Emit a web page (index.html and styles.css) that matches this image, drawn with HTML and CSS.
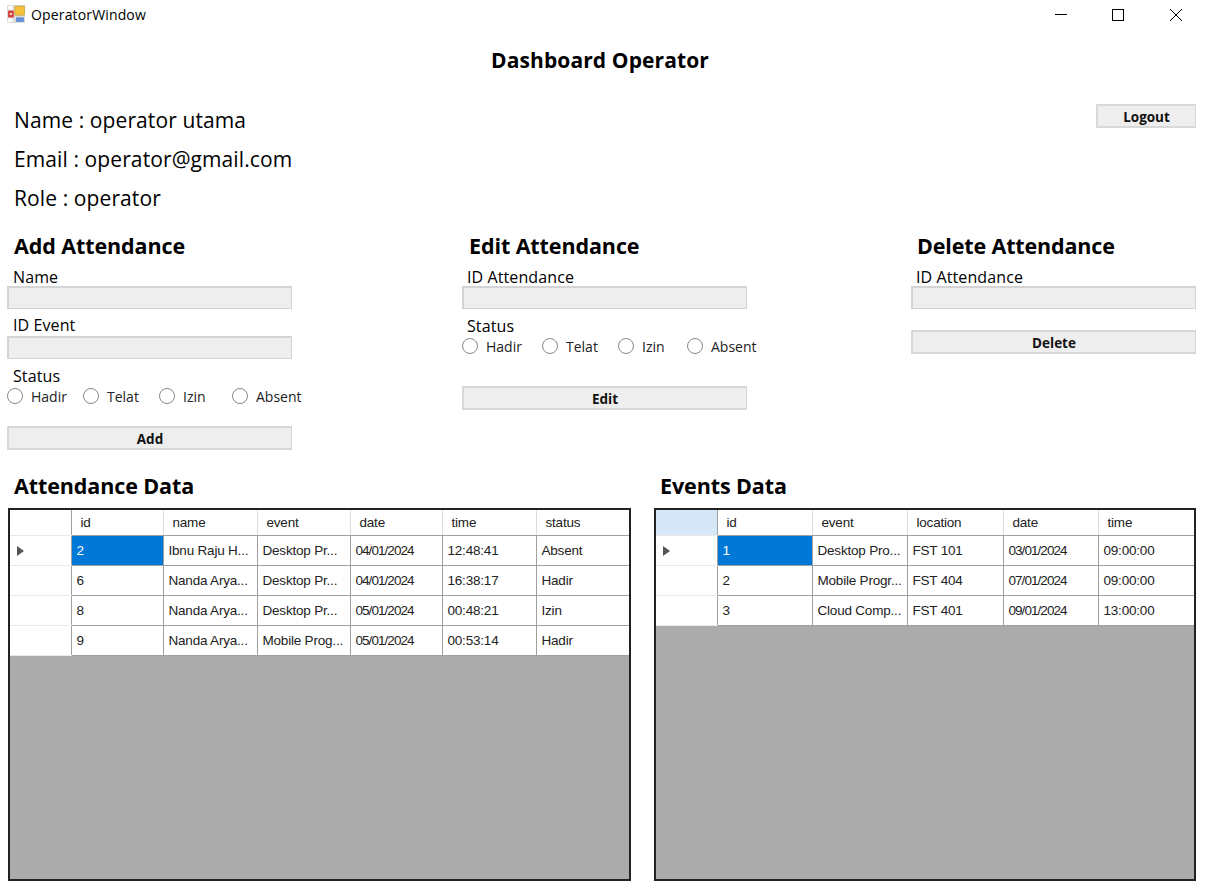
FILE: index.html
```html
<!DOCTYPE html>
<html lang="en">
  <head>
    <meta charset="UTF-8" />
    <title>OperatorWindow</title>
    <link rel="stylesheet" href="styles.css">
  </head>
  <body>
    <div class="titlebar">
      <svg class="app-icon" width="18" height="18" viewBox="0 0 16 16">
        <rect x="0" y="0" width="16" height="16" fill="#dcdcdc" />
        <rect x="1" y="1" width="4" height="3" fill="#fff" />
        <rect x="1" y="5" width="5" height="6" fill="#d23a32" />
        <rect x="2.500" y="7" width="2" height="2" fill="#f4d0c8" />
        <rect x="7" y="1" width="8.500" height="8" fill="#f5c33b" stroke="#c08f1c" stroke-width="0.500" />
        <rect x="1" y="12" width="4" height="3" fill="#fff" />
        <rect x="8" y="11" width="7" height="4" fill="#5f8fd8" />
      </svg>
      <span class="window-title">OperatorWindow</span>
      <div class="window-btns">
        <svg width="58" height="30" viewBox="0 0 58 30"><path d="M24 14.500H36" stroke="#000" /></svg>
        <svg width="58" height="30" viewBox="0 0 58 30"><rect x="23.500" y="9.500" width="11" height="11" fill="none" stroke="#000" /></svg>
        <svg width="58" height="30" viewBox="0 0 58 30"><path d="M23 9L35 21M35 9L23 21" stroke="#000" fill="none" /></svg>
      </div>
    </div>

    <h1 class="page-title">Dashboard Operator</h1>

    <div class="profile">
      <div class="profile-info">
        <p>Name : operator utama</p>
        <p>Email : operator@gmail.com</p>
        <p>Role : operator</p>
      </div>
      <button class="btn logout" type="button">Logout</button>
    </div>

    <div class="forms">
      <form class="panel">
        <h2>Add Attendance</h2>
        <label class="field-label">Name</label>
        <input class="field" type="text" />
        <label class="field-label">ID Event</label>
        <input class="field" type="text" />
        <label class="field-label status-label">Status</label>
        <div class="radios radios-add">
          <label><input type="radio" name="add_status" />Hadir</label>
          <label><input type="radio" name="add_status" />Telat</label>
          <label><input type="radio" name="add_status" />Izin</label>
          <label><input type="radio" name="add_status" />Absent</label>
        </div>
        <button class="btn wide" type="button">Add</button>
      </form>

      <form class="panel">
        <h2>Edit Attendance</h2>
        <label class="field-label">ID Attendance</label>
        <input class="field" type="text" />
        <label class="field-label status-label">Status</label>
        <div class="radios radios-edit">
          <label><input type="radio" name="edit_status" />Hadir</label>
          <label><input type="radio" name="edit_status" />Telat</label>
          <label><input type="radio" name="edit_status" />Izin</label>
          <label><input type="radio" name="edit_status" />Absent</label>
        </div>
        <button class="btn wide edit-btn" type="button">Edit</button>
      </form>

      <form class="panel">
        <h2>Delete Attendance</h2>
        <label class="field-label">ID Attendance</label>
        <input class="field" type="text" />
        <button class="btn wide delete-btn" type="button">Delete</button>
      </form>
    </div>

    <div class="data">
      <section class="data-section attendance">
        <h2>Attendance Data</h2>
        <div class="grid-box">
          <table class="grid">
            <colgroup>
              <col class="col-head" /><col style="width: 92px" /><col style="width: 94px" /><col style="width: 93px" /><col style="width: 92px" /><col style="width: 94px" /><col />
            </colgroup>
            <thead>
              <tr><th class="row-head"></th><th>id</th><th>name</th><th>event</th><th>date</th><th>time</th><th>status</th></tr>
            </thead>
            <tbody>
              <tr><td class="row-head current"></td><td class="selected">2</td><td>Ibnu Raju H...</td><td>Desktop Pr...</td><td>04/01/2024</td><td>12:48:41</td><td>Absent</td></tr>
              <tr><td class="row-head"></td><td>6</td><td>Nanda Arya...</td><td>Desktop Pr...</td><td>04/01/2024</td><td>16:38:17</td><td>Hadir</td></tr>
              <tr><td class="row-head"></td><td>8</td><td>Nanda Arya...</td><td>Desktop Pr...</td><td>05/01/2024</td><td>00:48:21</td><td>Izin</td></tr>
              <tr><td class="row-head"></td><td>9</td><td>Nanda Arya...</td><td>Mobile Prog...</td><td>05/01/2024</td><td>00:53:14</td><td>Hadir</td></tr>
            </tbody>
          </table>
        </div>
      </section>

      <section class="data-section events">
        <h2>Events Data</h2>
        <div class="grid-box">
          <table class="grid">
            <colgroup>
              <col class="col-head" /><col style="width: 95px" /><col style="width: 95px" /><col style="width: 96px" /><col style="width: 95px" /><col />
            </colgroup>
            <thead>
              <tr><th class="row-head corner"></th><th>id</th><th>event</th><th>location</th><th>date</th><th>time</th></tr>
            </thead>
            <tbody>
              <tr><td class="row-head current"></td><td class="selected">1</td><td>Desktop Pro...</td><td>FST 101</td><td>03/01/2024</td><td>09:00:00</td></tr>
              <tr><td class="row-head"></td><td>2</td><td>Mobile Progr...</td><td>FST 404</td><td>07/01/2024</td><td>09:00:00</td></tr>
              <tr><td class="row-head"></td><td>3</td><td>Cloud Comp...</td><td>FST 401</td><td>09/01/2024</td><td>13:00:00</td></tr>
            </tbody>
          </table>
        </div>
      </section>
    </div>
  </body>
</html>
```

FILE: styles.css
```css
* {
  box-sizing: border-box;
}
html,
body {
  height: 100%;
}
body {
  margin: 0;
  background: #fff;
  color: #000;
  font-family: "Open Sans", "Noto Sans", sans-serif;
  overflow: hidden;
}

/* window chrome */
.titlebar {
  display: flex;
  align-items: center;
  height: 30px;
  padding-left: 7px;
}
.app-icon {
  margin-top: -2px;
}
.window-title {
  margin-left: 6px;
  margin-bottom: 2px;
  font-size: 14px;
  letter-spacing: 0.15px;
}
.window-btns {
  display: flex;
  margin-left: auto;
  margin-right: 1px;
}

.page-title {
  margin: 16px 0 0;
  height: 28px;
  padding-right: 6px;
  font-size: 21px;
  line-height: 28px;
  font-weight: 700;
  text-align: center;
  letter-spacing: 0.1px;
}

/* operator info */
.profile {
  display: flex;
  justify-content: space-between;
  align-items: flex-start;
  padding: 0 10px 0 14px;
  margin-top: 27px;
  height: 131px;
}
.profile-info p {
  margin: 0;
  height: 39px;
  font-size: 21px;
  line-height: 39px;
  letter-spacing: 0.1px;
}
.logout {
  width: 100px;
  margin-top: 3px;
}

.btn {
  height: 24px;
  padding: 1px 0 0;
  background: #eee;
  border: 1px solid #d8d8d8;
  border-width: 2px 1px 2px 2px;
  font-family: inherit;
  font-size: 13.500px;
  font-weight: 700;
  color: #111;
}

/* forms */
.forms {
  display: grid;
  grid-template-columns: 455px 449px 285px;
  padding-left: 7px;
  height: 240px;
}
.panel {
  display: flex;
  flex-direction: column;
  align-items: flex-start;
  width: 285px;
}
.panel h2,
.data-section h2 {
  margin: 0 0 0 7px;
  height: 28px;
  font-size: 21.500px;
  line-height: 28px;
  font-weight: 700;
  letter-spacing: -0.1px;
  white-space: nowrap;
}
.panel:nth-child(3) h2 {
  margin-left: 6px;
  letter-spacing: -0.15px;
}
.field-label {
  height: 21px;
  margin: 6px 0 0 6px;
  font-size: 16px;
  line-height: 21px;
  letter-spacing: 0.1px;
}
.panel h2 + .field-label {
  height: 20px;
  line-height: 22px;
}
.panel:nth-child(n + 2) .field-label {
  margin-left: 5px;
}
.panel .status-label {
  margin-top: 7px;
  margin-bottom: -1px;
}
.field {
  width: 285px;
  height: 23px;
  background: #eee;
  border: 1px solid #d4d4d4;
  border-top-width: 2px;
  border-left-width: 2px;
}
.radios {
  display: grid;
  height: 20px;
}
.radios-add {
  grid-template-columns: 76px 76px 73px auto;
}
.radios-edit {
  grid-template-columns: 80px 76px 69px auto;
}
.radios label {
  display: flex;
  align-items: center;
  font-size: 14px;
  color: #222;
  white-space: nowrap;
}
.radios input {
  appearance: none;
  width: 16px;
  height: 16px;
  margin: 0 8px 0 0;
  background: #fff;
  border: 1px solid #888;
  border-radius: 50%;
}
.wide {
  width: 285px;
  margin-top: 20px;
}
.edit-btn {
  margin-top: 30px;
}
.delete-btn {
  margin-top: 21px;
}

/* data grids */
.data {
  display: grid;
  grid-template-columns: 623px 542px;
  column-gap: 23px;
  padding-left: 8px;
}
.data-section h2 {
  margin-left: 6px;
  margin-bottom: 8px;
}
.grid-box {
  height: 373px;
  background: #ababab;
  border: 2px solid #222;
}
.grid {
  table-layout: fixed;
  width: 100%;
  border-collapse: collapse;
  font-family: "Liberation Sans", Arial, sans-serif;
  font-size: 13.500px;
  letter-spacing: -0.2px;
  background: #fff;
}
.col-head {
  width: 61px;
}
.grid th {
  height: 25px;
  padding: 0 0 0 9px;
  background: #fff;
  border-right: 1px solid #ddd;
  border-bottom: 1px solid #a0a0a0;
  font-weight: 400;
  text-align: left;
  color: #222;
}
.grid td {
  height: 30px;
  padding: 0 0 0 5px;
  border-right: 1px solid #a0a0a0;
  border-bottom: 1px solid #a0a0a0;
  color: #222;
  white-space: nowrap;
  overflow: hidden;
}
.grid td:nth-child(5) {
  letter-spacing: -0.95px;
}
.grid th:last-child,
.grid td:last-child {
  border-right: none;
}
.grid .row-head {
  padding: 0;
  border-right: 1px solid #a0a0a0;
  border-bottom: 1px solid #e8e8e8;
}
.grid .corner {
  background: #d6e8f7;
}
.grid .selected {
  background: #0078d7;
  color: #fff;
}
.current {
  position: relative;
}
.current::after {
  content: "";
  position: absolute;
  left: 7px;
  top: 10px;
  border-left: 7px solid #555;
  border-top: 5px solid transparent;
  border-bottom: 5px solid transparent;
}
```
